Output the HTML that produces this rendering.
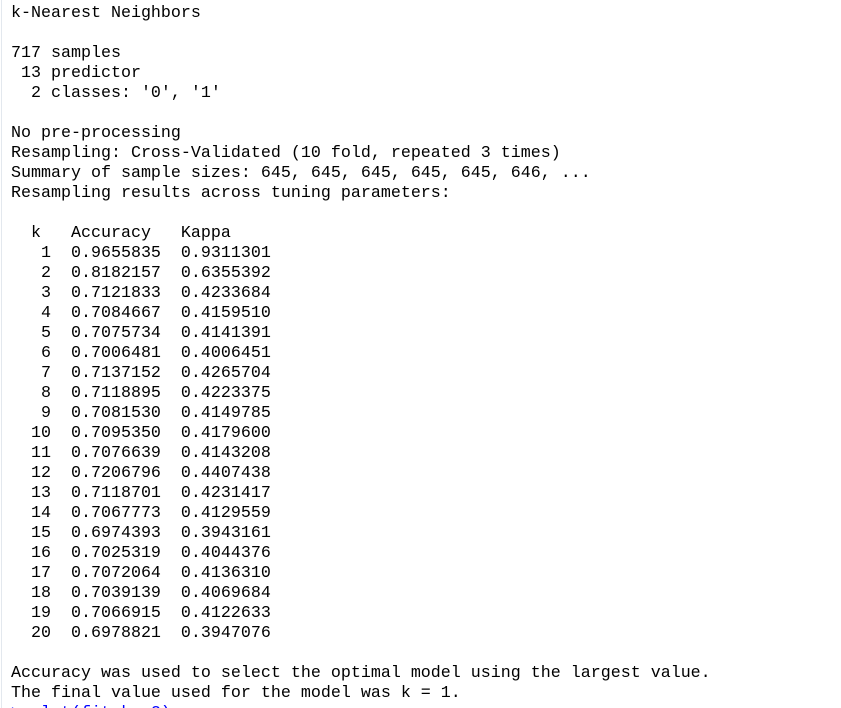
<!DOCTYPE html>
<html><head><meta charset="utf-8"><style>
html,body{margin:0;padding:0;background:#fff;width:841px;height:708px;overflow:hidden;position:relative}
pre{position:absolute;left:11px;top:4px;margin:0;font-family:"Liberation Mono",monospace;font-size:16.67px;line-height:20px;color:#000}
.b{color:#0000ff}
.l1{position:absolute;left:1px;top:0;width:1px;height:708px;background:#e3e8ee}
</style></head><body>
<div class="l1"></div>
<pre>k-Nearest Neighbors

717 samples
 13 predictor
  2 classes: '0', '1'

No pre-processing
Resampling: Cross-Validated (10 fold, repeated 3 times)
Summary of sample sizes: 645, 645, 645, 645, 645, 646, ...
Resampling results across tuning parameters:

  k   Accuracy   Kappa
   1  0.9655835  0.9311301
   2  0.8182157  0.6355392
   3  0.7121833  0.4233684
   4  0.7084667  0.4159510
   5  0.7075734  0.4141391
   6  0.7006481  0.4006451
   7  0.7137152  0.4265704
   8  0.7118895  0.4223375
   9  0.7081530  0.4149785
  10  0.7095350  0.4179600
  11  0.7076639  0.4143208
  12  0.7206796  0.4407438
  13  0.7118701  0.4231417
  14  0.7067773  0.4129559
  15  0.6974393  0.3943161
  16  0.7025319  0.4044376
  17  0.7072064  0.4136310
  18  0.7039139  0.4069684
  19  0.7066915  0.4122633
  20  0.6978821  0.3947076

Accuracy was used to select the optimal model using the largest value.
The final value used for the model was k = 1.
<span class="b">&gt; plot(fit.knn2)</span></pre>
</body></html>
